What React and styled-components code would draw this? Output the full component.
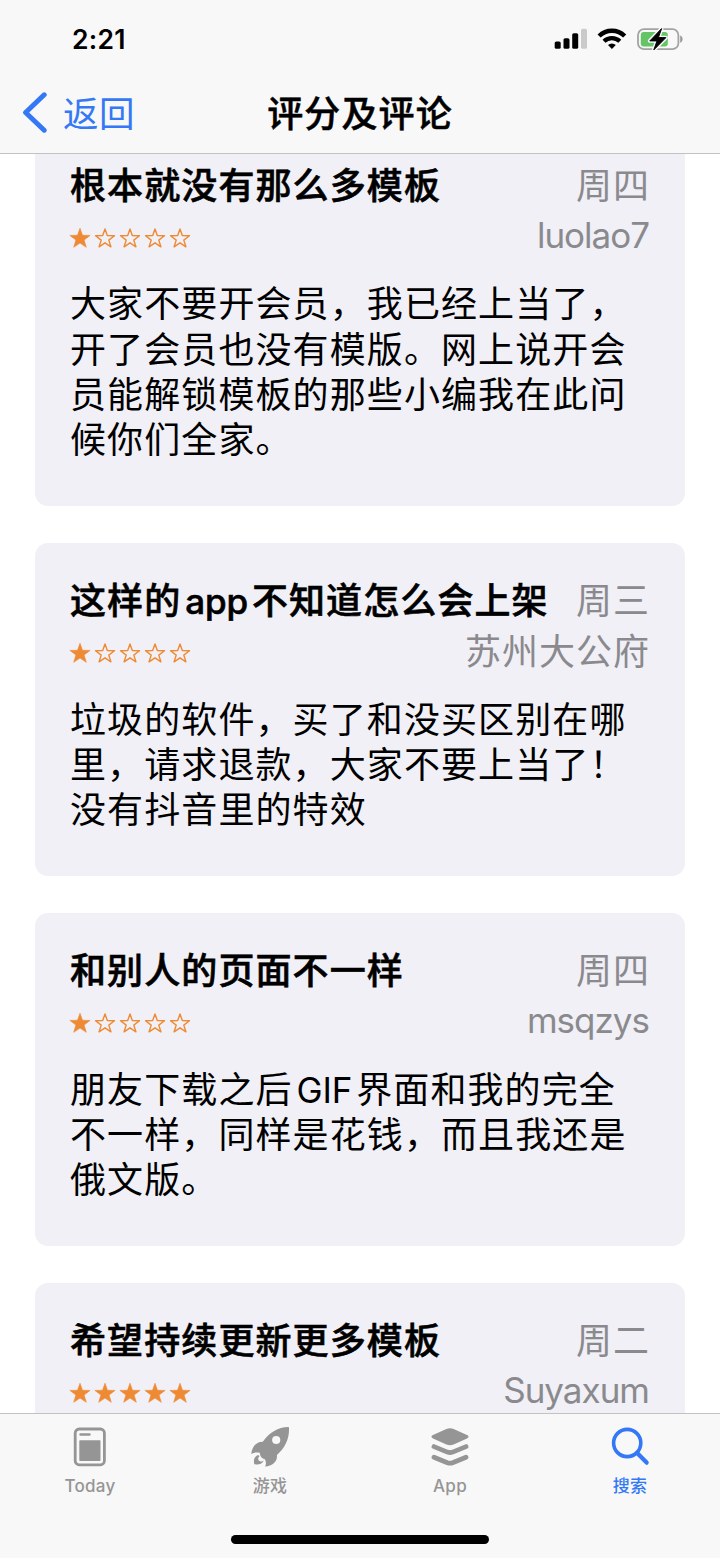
import React from "react";
import styled, { createGlobalStyle } from "styled-components";

const GlobalStyle = createGlobalStyle`
  * { box-sizing: border-box; }
  html, body { margin: 0; padding: 0; background: #fff; }
  body { font-family: Inter, "Noto Sans CJK SC", sans-serif; color: #000; }
`;

const Screen = styled.div`
  width: 720px;
  height: 1558px;
  display: flex;
  flex-direction: column;
  overflow: hidden;
  background: #fff;
`;

const Header = styled.header`
  flex: none;
  height: 154px;
  background: #f8f8f8;
  border-bottom: 1px solid #c2c2c5;
`;

const StatusBar = styled.div`
  height: 78px;
  padding: 0 36px 0 72px;
  display: flex;
  align-items: center;
  justify-content: space-between;
`;

const Time = styled.span`
  font-size: 26.5px;
  line-height: 32px;
  font-weight: 600;
  letter-spacing: 0.3px;
`;

const StatusIcons = styled.div`
  display: flex;
  align-items: center;
`;

const NavBar = styled.div`
  height: 70px;
  padding: 0 21px;
  display: grid;
  grid-template-columns: 1fr auto 1fr;
  align-items: center;
`;

const BackButton = styled.button`
  display: flex;
  align-items: center;
  gap: 16px;
  padding: 0;
  border: 0;
  background: none;
  color: #3478f6;
  font: inherit;
  font-size: 35.5px;
  line-height: 50px;
  letter-spacing: 0.4px;
`;

const BackLabel = styled.span`
  padding-top: 3px;
`;

const NavTitle = styled.h1`
  margin: 0;
  padding-top: 2px;
  font-size: 36px;
  line-height: 50px;
  font-weight: 500;
  letter-spacing: 1.1px;
  -webkit-text-stroke: 0.5px currentColor;
`;

const Feed = styled.main`
  flex: 1;
  min-height: 0;
  overflow: hidden;
`;

const ReviewList = styled.div`
  margin-top: -26px;
  padding: 0 35px;
  display: flex;
  flex-direction: column;
  gap: 37px;
`;

const Card = styled.article`
  flex: none;
  padding: 32px 35px 42.7px;
  border-radius: 13px;
  background: #f1f0f6;
`;

const CardHead = styled.div`
  display: flex;
  align-items: center;
  justify-content: space-between;
  height: 51px;
`;

const ReviewTitle = styled.h2`
  margin: 0;
  padding-top: 2px;
  font-size: 36px;
  line-height: 51px;
  font-weight: 500;
  letter-spacing: 1.1px;
  -webkit-text-stroke: 0.6px currentColor;
  white-space: nowrap;
`;

const LatinRun = styled.span`
  margin: 0 4px;
  font-size: 35px;
  letter-spacing: -0.2px;
`;

const Meta = styled.span`
  padding-top: ${(p) => (p.$latin ? "0" : "2px")};
  padding-right: ${(p) => (p.$latin ? "1px" : "0")};
  padding-bottom: ${(p) => (p.$latin ? "2px" : "0")};
  font-size: ${(p) => (p.$latin ? "35px" : "36px")};
  line-height: ${(p) => (p.$latin ? "49px" : "51px")};
  letter-spacing: ${(p) => (p.$latin ? "-1px" : "1px")};
  color: #8a8a8e;
  white-space: nowrap;
`;

const Stars = styled.div`
  display: flex;
  gap: 3px;
  margin-left: -1px;
  padding-top: 3px;
`;

const Body = styled.p`
  margin: 20.4px -10px 0 0;
  font-size: 36px;
  line-height: 45.3px;
  letter-spacing: 1.1px;
  white-space: nowrap;
`;

const TabBar = styled.nav`
  flex: none;
  height: 145px;
  border-top: 1px solid #c2c2c5;
  background: #f8f8f8;
  display: flex;
  flex-direction: column;
`;

const Tabs = styled.div`
  display: grid;
  grid-template-columns: repeat(4, 1fr);
  height: 121px;
  padding-top: 12px;
`;

const Tab = styled.div`
  display: flex;
  flex-direction: column;
  align-items: center;
  gap: 6px;
  color: ${(p) => (p.$active ? "#3478f6" : "#959595")};
  font-size: 17px;
  line-height: 24px;
  font-weight: 500;
  letter-spacing: ${(p) => (p.$latin ? "0.3px" : "0.2px")};
`;

const HomeIndicator = styled.div`
  width: 258px;
  height: 9px;
  border-radius: 5px;
  background: #000;
  align-self: center;
`;

const STAR = "M11 1.2 13.5 8.3 21.1 8.4 15.1 13 17.3 20.3 11 16.1 4.7 20.3 6.9 13 0.9 8.4 8.5 8.3Z";
const STAR_LINE = "M11 1.9 13.3 8.6 20.5 8.8 14.8 13.1 16.9 19.8 11 15.8 5.1 19.8 7.2 13.1 1.5 8.8 8.7 8.6Z";

function Star({ filled }) {
  return (
    <svg width="22" height="22" viewBox="0 0 22 22">
      {filled ? (
        <path d={STAR} fill="#ee8a33" stroke="#ee8a33" strokeWidth=".6" strokeLinejoin="round" />
      ) : (
        <path d={STAR_LINE} fill="none" stroke="#ee8a33" strokeWidth="1.4" strokeLinejoin="round" />
      )}
    </svg>
  );
}

const SystemIcons = () => (
  <svg width="130" height="26" viewBox="0 0 130 26">
    <rect x="0.7" y="15.4" width="6" height="7.4" rx="1.6" />
    <rect x="9.5" y="12.2" width="6" height="10.6" rx="1.6" />
    <rect x="18.2" y="7.2" width="6" height="15.6" rx="1.6" />
    <rect x="27" y="2.8" width="6" height="20" rx="1.6" fill="#cacaca" />
    <g fill="none" stroke="#000" strokeWidth="4.3">
      <path d="M45.1 10.1a18 18 0 0 1 25.6 0" />
      <path d="M50 15.3a11.4 11.4 0 0 1 15.8 0" />
    </g>
    <path d="M54 18.9a5.8 5.8 0 0 1 7.8 0l-3.9 4.1Z" />
    <rect x="84" y="3.2" width="40.4" height="20" rx="6" fill="none" stroke="#a3a3a3" strokeWidth="1.8" />
    <path d="M126.2 9.6c3.2 1 3.2 6.2 0 7.2Z" fill="#999" />
    <rect x="86.8" y="6" width="27" height="14.4" rx="3" fill="#65c466" />
    <path d="M107.6 2.6 95.8 14.9h7.2l-3.2 9 12.1-12.3h-7.5Z" stroke="#f8f8f8" strokeWidth="3.8" strokeLinejoin="round" />
    <path d="M107.6 2.6 95.8 14.9h7.2l-3.2 9 12.1-12.3h-7.5Z" stroke="#000" strokeWidth="1" strokeLinejoin="round" />
  </svg>
);

const BackIcon = () => (
  <svg width="26" height="42" viewBox="0 0 26 42" fill="none" stroke="#3478f6" strokeWidth="5" strokeLinecap="round" strokeLinejoin="round">
    <path d="M23.2 2.8 4.6 20.5l18.6 17.7" />
  </svg>
);

const TodayIcon = () => (
  <svg width="42" height="42" viewBox="0 0 42 42">
    <rect x="6.2" y="3" width="29.2" height="35.8" rx="4" fill="none" stroke="#959595" strokeWidth="2.8" />
    <path d="M11.6 8.6h8.8" stroke="#959595" strokeWidth="2.5" strokeLinecap="round" />
    <rect x="10.3" y="14.3" width="21.2" height="20.8" rx=".8" fill="#959595" />
  </svg>
);

const RocketIcon = () => (
  <svg width="42" height="42" viewBox="0 0 42 42" fill="#959595">
    <path
      fillRule="evenodd"
      d="M39.2.9C29.3 1 20.3 6.3 13.8 15.8 7.6 15.5 2.9 20.5 2.2 28c2.7-1.7 5.4-1.8 8.5-1.3.3 3.6 2.4 5.9 5.2 6.6 1.2 2.2 1.6 5.1.1 7.3 8.1-.7 12.7-5.2 11.9-11.7C36.4 21.8 40.5 12.4 40 1.6c0-.5-.3-.7-.8-.7ZM27.2 9.9a4.1 4.1 0 1 1 0 8.2 4.1 4.1 0 0 1 0-8.2Z"
    />
    <path d="M9.2 28.9c-3.8 1.4-5 4.6-3.9 9.4 4.9.5 8.7-.9 9.4-4.4-1.2 1.6-3 1.9-4.4 1-1.5-1-1.5-3.4.3-4.6Z" />
  </svg>
);

const StackIcon = () => (
  <svg width="42" height="42" viewBox="0 0 42 42" fill="#959595">
    <path d="M17.4 3.1q3.6-1.6 7.2 0L38 9q3.2 1.7 0 3.4l-13.4 6.1q-3.6 1.6-7.2 0L4 12.4Q.8 10.7 4 9Z" />
    <path
      fill="none"
      stroke="#959595"
      strokeWidth="4.8"
      strokeLinecap="round"
      strokeLinejoin="round"
      d="M5 20.6 18.4 26.1q2.6 1 5.2 0L37 20.6M5 31.2l13.4 5.5q2.6 1 5.2 0L37 31.2"
    />
  </svg>
);

const SearchIcon = () => (
  <svg width="42" height="42" viewBox="0 0 42 42" fill="none" stroke="#3478f6">
    <circle cx="18.2" cy="17" r="13.6" strokeWidth="3.6" />
    <path d="M28.1 27 37.6 36.6" strokeWidth="4.3" strokeLinecap="round" />
  </svg>
);

const reviews = [
  {
    title: "根本就没有那么多模板",
    day: "周四",
    author: "luolao7",
    latin: true,
    rating: 1,
    lines: ["大家不要开会员，我已经上当了，", "开了会员也没有模版。网上说开会", "员能解锁模板的那些小编我在此问", "候你们全家。"],
  },
  {
    title: "这样的app不知道怎么会上架",
    day: "周三",
    author: "苏州大公府",
    rating: 1,
    lines: ["垃圾的软件，买了和没买区别在哪", "里，请求退款，大家不要上当了！", "没有抖音里的特效"],
  },
  {
    title: "和别人的页面不一样",
    day: "周四",
    author: "msqzys",
    latin: true,
    rating: 1,
    lines: ["朋友下载之后GIF界面和我的完全", "不一样，同样是花钱，而且我还是", "俄文版。"],
  },
  {
    title: "希望持续更新更多模板",
    day: "周二",
    author: "Suyaxum",
    latin: true,
    rating: 5,
    lines: [],
  },
];

// Sets Latin words inside Chinese text a little apart from their neighbours.
function MixedText({ text }) {
  return text
    .split(/([A-Za-z]+)/)
    .map((part, i) => (i % 2 ? <LatinRun key={i}>{part}</LatinRun> : part));
}

function Review({ review }) {
  return (
    <Card>
      <CardHead>
        <ReviewTitle>
          <MixedText text={review.title} />
        </ReviewTitle>
        <Meta>{review.day}</Meta>
      </CardHead>
      <CardHead>
        <Stars>
          {[1, 2, 3, 4, 5].map((n) => (
            <Star key={n} filled={n <= review.rating} />
          ))}
        </Stars>
        <Meta $latin={review.latin}>{review.author}</Meta>
      </CardHead>
      <Body>
        {review.lines.map((line, i) => (
          <React.Fragment key={line}>
            {i > 0 && <br />}
            <MixedText text={line} />
          </React.Fragment>
        ))}
      </Body>
    </Card>
  );
}

export default function App() {
  return (
    <Screen>
      <GlobalStyle />
      <Header>
        <StatusBar>
          <Time>2:21</Time>
          <StatusIcons>
            <SystemIcons />
          </StatusIcons>
        </StatusBar>
        <NavBar>
          <BackButton>
            <BackIcon />
            <BackLabel>返回</BackLabel>
          </BackButton>
          <NavTitle>评分及评论</NavTitle>
        </NavBar>
      </Header>
      <Feed>
        <ReviewList>
          {reviews.map((r) => (
            <Review key={r.title} review={r} />
          ))}
        </ReviewList>
      </Feed>
      <TabBar>
        <Tabs>
          <Tab $latin>
            <TodayIcon />
            Today
          </Tab>
          <Tab>
            <RocketIcon />
            游戏
          </Tab>
          <Tab $latin>
            <StackIcon />
            App
          </Tab>
          <Tab $active>
            <SearchIcon />
            搜索
          </Tab>
        </Tabs>
        <HomeIndicator />
      </TabBar>
    </Screen>
  );
}
